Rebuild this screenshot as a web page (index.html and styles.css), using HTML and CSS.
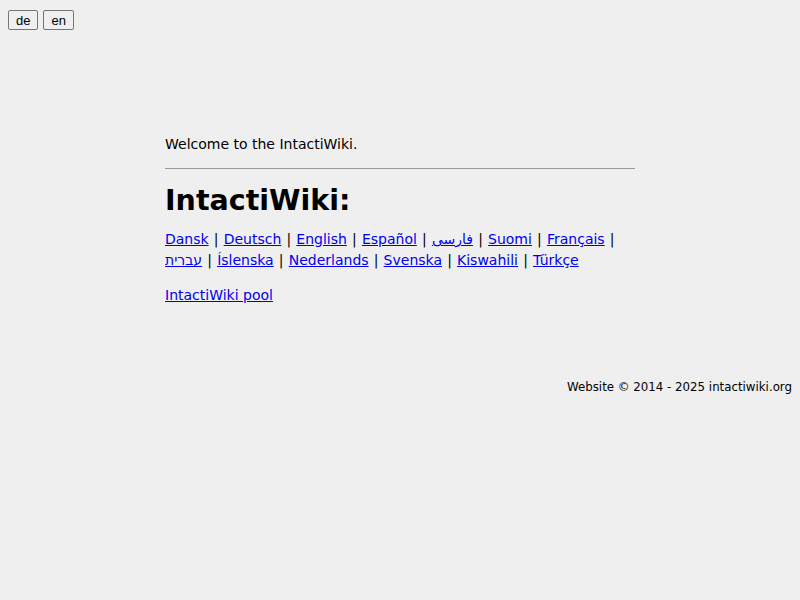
FILE: index.html
```html
<!DOCTYPE html>
<html lang="en">
<head>
    <meta charset="UTF-8">
    <title>IntactiWiki</title>
    <link rel="stylesheet" href="styles.css">
</head>
<body>
    <div class="lang-switch">
        <button>de</button>
        <button>en</button>
    </div>

    <div class="container">
        <p class="welcome">Welcome to the IntactiWiki.</p>
        <hr>
        <h1>IntactiWiki:</h1>
        <p class="wikis">
            <a href="#">Dansk</a> | <a href="#">Deutsch</a> | <a href="#">English</a> | <a href="#">Español</a> | <a href="#" class="fa" lang="fa">فارسی</a> | <a href="#">Suomi</a> | <a href="#">Français</a> |
            <a href="#" lang="he">עברית</a> | <a href="#">Íslenska</a> | <a href="#">Nederlands</a> | <a href="#">Svenska</a> | <a href="#">Kiswahili</a> | <a href="#">Türkçe</a>
        </p>
        <p class="pool"><a href="#">IntactiWiki pool</a></p>
    </div>

    <footer>Website &copy; 2014 - 2025 intactiwiki.org</footer>
</body>
</html>
```

FILE: styles.css
```css
body {
    margin: 8px;
    background-color: #efefef;
    font-family: "DejaVu Sans", Verdana, sans-serif;
    font-size: 14px;
    color: #000;
}

.lang-switch {
    padding-top: 2px;
    display: flex;
    gap: 5px;
}

.lang-switch button {
    font-family: "Liberation Sans", Arial, sans-serif;
    font-size: 13px;
    height: 20px;
    padding: 0 7px;
    background-color: #efefef;
    border: 1px solid #767676;
    border-radius: 2px;
}

.container {
    width: 470px;
    margin: 0 auto;
    padding-top: 106px;
}

.welcome {
    margin: 0 0 16px 0;
}

hr {
    border: none;
    border-top: 1px solid #999;
    margin: 0;
}

h1 {
    font-size: 28.5px;
    margin: 15px 0 12px 0;
}

.wikis {
    line-height: 21px;
    word-spacing: 0.7px;
    margin: 0 0 16px 0;
}

a {
    color: #0000ee;
}

.fa {
    font-size: 14px;
    line-height: 1;
}

.pool {
    margin: 0;
}

footer {
    text-align: right;
    font-size: 11.8px;
    margin-top: 77px;
}
```
